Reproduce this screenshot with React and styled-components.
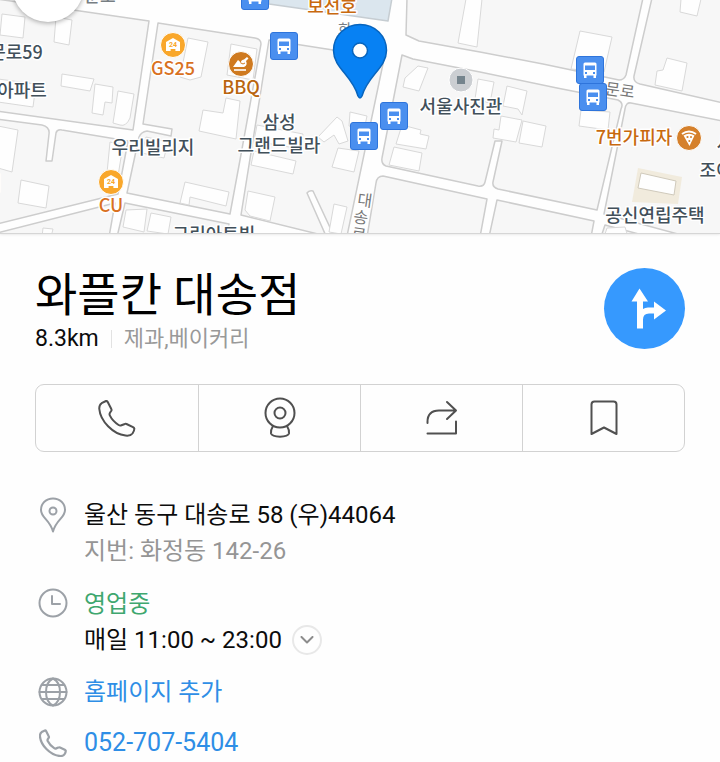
import React from "react";
import styled, { createGlobalStyle } from "styled-components";

const GlobalStyle = createGlobalStyle`
  *, *::before, *::after { box-sizing: border-box; }
  body {
    margin: 0;
    background: #fefefe;
    color: #0c0c0c;
    font-family: Roboto, "Noto Sans CJK KR", sans-serif;
  }
  h1, p, ul { margin: 0; padding: 0; }
  ul { list-style: none; }
  button { font: inherit; color: inherit; cursor: pointer; }
`;

const Page = styled.main`
  display: flex;
  flex-direction: column;
`;

/* Map */

const MapArea = styled.section`
  position: relative;
  overflow: hidden;
  height: 234px;
  border-bottom: 1px solid #d6d6d6;
  box-shadow: 0 0 3px rgba(0, 0, 0, 0.15);
`;

const MapCanvas = styled.svg`
  display: block;
  width: 100%;
  height: 234px;
`;

const Land = styled.path`
  fill: ${(p) => p.$fill || "#f7f7f7"};
  stroke: ${(p) => p.$edge || "#cdcdcd"};
  stroke-width: 1.5;
  stroke-linejoin: round;
`;

const Building = styled.path`
  fill: #fefefe;
  stroke: #d9d9d9;
  stroke-width: 1;
`;

const MapLabel = styled.text`
  font-family: "Noto Sans CJK KR", sans-serif;
  font-size: ${(p) => p.$size || 18}px;
  font-weight: ${(p) => p.$weight || 500};
  fill: ${(p) => p.$color || "#42505a"};
  stroke: #fff;
  stroke-width: 3px;
  stroke-linejoin: round;
  paint-order: stroke;
  text-anchor: middle;
`;

const BackButton = styled.button`
  position: absolute;
  top: -50px;
  left: 12px;
  width: 72px;
  height: 72px;
  border: 0;
  border-radius: 50%;
  background: #fff;
  box-shadow: 0 1px 5px rgba(0, 0, 0, 0.35);
`;

/* Place sheet */

const Sheet = styled.article`
  display: flex;
  flex-direction: column;
  padding: 31px 35px 0;
`;

const Header = styled.header`
  display: flex;
  justify-content: space-between;
  align-items: flex-start;
`;

const Title = styled.h1`
  font-size: 46px;
  line-height: 60px;
  font-weight: 400;
  color: #000;
`;

const Meta = styled.p`
  display: flex;
  align-items: center;
  line-height: 28px;
  font-size: 23px;
`;

const Category = styled.span`
  margin-left: 12px;
  padding-left: 12px;
  font-size: 22px;
  line-height: 18px;
  color: #999;
  border-left: 1px solid #e2e2e2;
`;

const RouteButton = styled.button`
  display: grid;
  place-items: center;
  flex: none;
  width: 81px;
  height: 81px;
  margin-top: 3px;
  padding: 0;
  border: 0;
  border-radius: 50%;
  background: #3699fe;
  color: #fff;
`;

const Actions = styled.div`
  display: grid;
  grid-template-columns: repeat(4, 1fr);
  height: 68px;
  margin-top: 31px;
  border: 1px solid #d2d2d2;
  border-radius: 9px;
`;

const ActionButton = styled.button`
  display: grid;
  place-items: center;
  padding: 0;
  border: 0;
  background: none;
  color: #505050;
  & + & { border-left: 1px solid #d2d2d2; }
`;

const Details = styled.ul`
  display: flex;
  flex-direction: column;
  gap: 17px;
  margin-top: 45px;
`;

const DetailRow = styled.li`
  display: grid;
  grid-template-columns: 35px 1fr;
  column-gap: 14px;
`;

const DetailIcon = styled.span`
  display: grid;
  place-items: center;
  height: 34px;
  color: #9ca1a7;
`;

const Line = styled.p`
  display: flex;
  align-items: center;
  font-size: 24px;
  line-height: 36px;
  color: ${(p) => p.$color || "#0c0c0c"};
`;

const DetailLink = styled.a`
  font-size: ${(p) => p.$size || 24}px;
  line-height: 34px;
  color: #2e8ee6;
  text-decoration: none;
`;

const ExpandButton = styled.button`
  display: grid;
  place-items: center;
  width: 30px;
  height: 30px;
  margin-left: 10px;
  padding: 0;
  border: 2px solid #e8e8e8;
  border-radius: 50%;
  background: none;
  color: #8c8c8c;
`;

const Icon = styled.svg`
  display: block;
  fill: none;
  stroke: currentColor;
  stroke-width: ${(p) => p.$weight || 2};
  stroke-linecap: round;
  stroke-linejoin: round;
`;

const lands = [
  "M-3,-1 L80,11 L149,21 L133,130 L-3,111Z",
  "M158,23 L255,38 Q261,39 261,44 L240,160 L230,214 L127,193 L139,137 Q141,132 147,131 L171,136 L172,129 L143,124Z",
  "M269,40 L333,50 L384,59 L347,236 L334,236 L313,191 Q309,190 307,193 L326,236 L241,215Z",
  "M-3,119 L42,125 Q50,127 49,134 L46,161 L52,161 L56,133 Q57,129 62,130 L128,141 L118,194 L-3,224Z",
  "M-3,233 L115,203 L109,237 L-3,237Z",
  "M125,203 L229,224 L227,237 L117,237Z",
  "M407,-2 L406,35 L419,41 L480,52 L543,64 L619,80 Q624,80 626,75 L643,-2Z",
  "M652,-2 L634,76 Q633,82 640,84 L723,103 L723,-2Z",
  "M402,55 L413,59 L480,72 L557,88 L618,100 Q624,103 621,109 L597,210 L498,189 Q492,187 493,182 L502,141 L495,141 L485,182 Q484,187 478,186 L386,166 Q381,164 382,158Z",
  "M383,176 L487,199 L480,237 L367,237 L376,183 Q377,176 383,176Z",
  "M497,200 L594,221 L591,237 L489,237Z",
  "M631,103 L723,121 L723,240 L700,240 L604,214 L625,109 Q626,102 631,103Z",
  "M605,225 L650,237 L601,237Z",
];

const buildings = [
  "M2,14 L25,17 L23,38 L0,35Z",
  "M56,17 L72,20 L69,45 L54,42Z",
  "M62,74 L94,79 L90,91 L61,86Z",
  "M95,84 L113,87 L112,103 L105,102 L103,115 L92,113Z",
  "M118,91 L134,94 L130,118 Q126,127 120,125 L113,123Z",
  "M-2,79 L36,84 L33,107 L-2,102Z",
  "M-2,126 L18,130 L12,172 L-2,168Z",
  "M21,180 L49,186 L46,208 L18,203Z",
  "M110,142 L123,145 L118,176 L107,173Z",
  "M188,38 L208,42 L201,77 L190,80 L180,77Z",
  "M231,44 L257,49 L253,80 L227,75Z",
  "M226,98 L240,101 L236,139 L199,131 L203,110 L223,113Z",
  "M146,137 L168,142 L164,158 L142,153Z",
  "M185,182 L229,192 L226,206 L190,197 L189,205 L180,203Z",
  "M126,210 L147,209 L144,232 L123,227Z",
  "M151,213 L171,217 L168,234 L147,231Z",
  "M43,228 L53,229 L51,237 L42,237Z",
  "M257,125 L303,134 L301,149 L254,141Z",
  "M254,151 L296,161 L293,174 L251,165Z",
  "M248,191 L275,197 L270,221 L250,216 L245,210Z",
  "M318,137 L337,117 L342,121 L348,141 L339,144 L334,135 L324,142Z",
  "M350,112 L367,116 L364,130 L349,126Z",
  "M338,148 L359,151 L354,172 L332,167Z",
  "M334,204 L347,207 L341,234 L329,232Z",
  "M418,66 L428,68 L419,91 L403,87 L405,78Z",
  "M402,125 L421,130 L420,134 L429,136 L426,149 L396,144Z",
  "M394,147 L422,153 L419,171 L389,165Z",
  "M466,-1 L482,-1 L477,47 L458,43Z",
  "M580,31 L612,37 L604,72 L571,69Z",
  "M681,-1 L701,-1 L697,16 L680,12Z",
  "M667,58 L687,63 L682,91 L655,85 L657,71 L663,70Z",
  "M507,86 L527,91 L522,115 L518,109 L503,106Z",
  "M478,79 L494,82 L490,103 L475,99Z",
  "M501,116 L522,120 L516,142 L493,138 L494,129 L499,130Z",
  "M523,121 L546,126 L542,147 L519,143Z",
  "M581,110 L610,112 L608,130 L579,126Z",
  "M607,228 L625,227 L628,237 L604,237Z",
];

const busStops = [[255, -4], [284, 46], [394, 116], [364, 136], [590, 70], [593, 97]];

function BusStop({ x, y }) {
  return (
    <g transform={`translate(${x} ${y})`}>
      <rect x="-13.5" y="-13.5" width="27" height="27" rx="2.5" fill="#4a8fef" stroke="#2e74db" />
      <path
        fill="#fff"
        fillRule="evenodd"
        d="M-5,-7.5H5Q6.5,-7.5 6.5,-6V5.5H6V8H3.5V5.5H-3.5V8H-6V5.5H-6.5V-6Q-6.5,-7.5 -5,-7.5Z M-5,-4.5V0H5V-4.5Z M-5,2V4H-3V2Z M3,2V4H5V2Z"
      />
    </g>
  );
}

function StoreMarker({ x, y }) {
  return (
    <g transform={`translate(${x} ${y})`}>
      <circle r="12.5" fill="#f9a72b" stroke="#fff" />
      <path d="M0,-7 L7,-3 V6 H2.4 V4 H-2.4 V6 H-7 V-3Z" fill="#fff" />
      <text y="2.4" textAnchor="middle" fontSize="7" fontWeight="700" fontFamily="Roboto, sans-serif" fill="#f9a72b">24</text>
    </g>
  );
}

function PlaceMap() {
  return (
    <MapArea aria-label="지도">
      <MapCanvas viewBox="0 0 720 234" preserveAspectRatio="xMidYMid slice">
        <rect width="720" height="234" fill="#fefefe" />
        {lands.map((d) => <Land key={d} d={d} />)}
        <Land d="M269,-2 L269,4 L388,21 L392,-2Z" $fill="#dbe6ee" $edge="#c6cdd2" />
        <path d="M638,168 L682,177 L678,204 L632,202Z" fill="#f1ebdd" />
        {buildings.map((d) => <Building key={d} d={d} />)}
        <path d="M641,173 L676,181 L674,195 L638,188Z" fill="#fefefe" stroke="#d0cabc" />

        <MapLabel x="100" y="2" $size={17} $color="#777e83">문로</MapLabel>
        <MapLabel x="16" y="59">문로59</MapLabel>
        <MapLabel x="22" y="97">아파트</MapLabel>
        <MapLabel x="153" y="154">우리빌리지</MapLabel>
        <MapLabel x="279" y="129">삼성</MapLabel>
        <MapLabel x="279" y="152">그랜드빌라</MapLabel>
        <MapLabel x="461" y="113">서울사진관</MapLabel>
        <MapLabel x="655" y="222">공신연립주택</MapLabel>
        <MapLabel x="716" y="177">조이</MapLabel>
        <MapLabel x="214" y="241">그린아트빌</MapLabel>
        <MapLabel x="-7" y="190">지</MapLabel>
        <MapLabel x="725" y="150">사</MapLabel>
        <MapLabel x="173" y="75" $color="#d9711f">GS25</MapLabel>
        <MapLabel x="241" y="94" $color="#b9650f">BBQ</MapLabel>
        <MapLabel x="111" y="212" $color="#d9711f">CU</MapLabel>
        <MapLabel x="332" y="13" $color="#c8690f">보선호</MapLabel>
        <MapLabel x="634" y="144" $color="#c8690f">7번가피자</MapLabel>
        <MapLabel x="345" y="35" $size={15} $weight={400} $color="#777e83">화</MapLabel>
        <MapLabel x="620" y="96" $size={16} $weight={400} $color="#777" transform="rotate(8 620 90)">문로</MapLabel>
        <MapLabel x="365" y="206" $size={16} $weight={400} $color="#777" transform="rotate(8 365 200)">대</MapLabel>
        <MapLabel x="361" y="223" $size={16} $weight={400} $color="#777" transform="rotate(8 361 216)">송</MapLabel>
        <MapLabel x="359" y="240" $size={16} $weight={400} $color="#777" transform="rotate(8 359 233)">로</MapLabel>

        <StoreMarker x="173" y="45" />
        <StoreMarker x="111" y="182" />
        <g transform="translate(241 64)">
          <circle r="12.5" fill="#cf7a20" stroke="#fff" />
          <path d="M-8,3 L-3,-4 Q-1,-3 0,0 Q-1,-4 3,-4.5 L6,-7 L7.5,-5.5 L5,-3 Q7,1 3,3Z" fill="#fff" />
          <path d="M-7,6H5" stroke="#fff" strokeWidth="1.6" />
          <path d="M0,-1 Q2,1 4,-1" fill="none" stroke="#cf7a20" />
        </g>
        <g transform="translate(689 138)">
          <circle r="12.5" fill="#d5802b" stroke="#fff" />
          <path d="M-7,-4 Q0,-9 7,-4" fill="none" stroke="#fff" strokeWidth="2" />
          <path d="M-5.5,-2.5 Q0,-6 5.5,-2.5 L0.5,8Z" fill="#fff" />
          <circle cx="-1.5" cy="-1" r="1.1" fill="#d5802b" />
          <circle cx="2" cy="-1" r="1" fill="#d5802b" />
          <circle cx="0.3" cy="3" r="1" fill="#d5802b" />
        </g>
        <g transform="translate(461 80)">
          <circle r="12" fill="#cbced2" stroke="#fff" />
          <rect x="-4" y="-4" width="8" height="8" fill="#75848d" />
        </g>
        {busStops.map(([x, y]) => <BusStop key={`${x}-${y}`} x={x} y={y} />)}

        <path
          d="M360,24.5 C345,24.5 333.5,36 333.5,50.5 C333.5,68 353,76 358,96 Q360,100 362,96 C367,76 386.5,68 386.5,50.5 C386.5,36 375,24.5 360,24.5Z"
          fill="#0781f3"
          stroke="#0764bd"
          strokeWidth="1.5"
        />
        <circle cx="360" cy="50.5" r="7.5" fill="#fff" stroke="#0764bd" strokeWidth="1.5" />
      </MapCanvas>
      <BackButton type="button" aria-label="뒤로" />
    </MapArea>
  );
}

const PhoneIcon = ({ size, weight }) => (
  <Icon width={size} height={size} viewBox="0 0 38 38" $weight={weight} aria-hidden="true">
    <path d="M8,2 L3.6,4.2 Q1,6 1.3,10 C2.3,22 15,35 27.5,36.6 Q32.5,37.2 34.5,34.5 Q36.5,31.5 36.3,29.5 Q36,28.8 35,28.2 L28.5,25 Q27.3,24.5 26.3,25.2 L23.4,26.3 Q22,26.9 20.6,26 Q14.5,22 11.8,16.4 Q11.2,15.2 12,13.8 L13.3,11.8 Q13.8,10.8 13.2,9.8 L9.6,2.8 Q9,1.7 8,2Z" />
  </Icon>
);

const RoadviewIcon = () => (
  <Icon width="32" height="42" viewBox="0 0 32 42" aria-hidden="true">
    <circle cx="16" cy="16" r="14.5" />
    <circle cx="16" cy="16" r="5.5" />
    <path d="M9,29 Q6.5,33 7,36.5 Q8,39.5 16,39.8 Q24,39.5 25,36.5 Q25.5,33 23,29" />
  </Icon>
);

const ShareIcon = () => (
  <Icon width="32" height="36" viewBox="0 0 32 36" aria-hidden="true">
    <path d="M1.5,23 V22 Q1.5,10.5 13,10.5 H29.5 M21,2 L30,10.5 L21,19 M30,21.5 V33.5 H1.5" />
  </Icon>
);

const BookmarkIcon = () => (
  <Icon width="28" height="36" viewBox="0 0 28 36" aria-hidden="true">
    <path d="M1.5,34 V4.5 Q1.5,1.5 4.5,1.5 H23.5 Q26.5,1.5 26.5,4.5 V34 L14,27.5Z" />
  </Icon>
);

const RouteIcon = () => (
  <svg width="44" height="44" viewBox="0 0 44 44" fill="currentColor" aria-hidden="true">
    <path d="M16.5,1.5 L25,14.5 H20 V22 Q22,20.5 25,20.5 H31 V14.5 L43,23.5 L31,32.5 V26.5 H26 Q20,26.5 20,32.5 V41.5 H14 V14.5 H8.5Z" />
  </svg>
);

const PlaceIcon = () => (
  <Icon width="28" height="36" viewBox="0 0 28 36" aria-hidden="true">
    <path d="M14,1.5 C7,1.5 2,6.5 2,13 C2,21 10.5,22 14,34.5 C17.5,22 26,21 26,13 C26,6.5 21,1.5 14,1.5Z" />
    <circle cx="14" cy="14" r="3.5" />
  </Icon>
);

const ClockIcon = () => (
  <Icon width="30" height="30" viewBox="0 0 30 30" aria-hidden="true">
    <circle cx="15" cy="15" r="13.5" />
    <path d="M14,8V16H22" />
  </Icon>
);

const GlobeIcon = () => (
  <Icon width="30" height="30" viewBox="0 0 30 30" aria-hidden="true">
    <circle cx="15" cy="15" r="13.5" />
    <path d="M15,1.5 Q8,5 8,15 Q8,25 15,28.5 Q22,25 22,15 Q22,5 15,1.5Z M4,8H26 M1.5,15H28.5 M4,22H26" />
  </Icon>
);

export default function App() {
  return (
    <Page>
      <GlobalStyle />
      <PlaceMap />
      <Sheet>
        <Header>
          <div>
            <Title>와플칸 대송점</Title>
            <Meta>
              8.3km
              <Category>제과,베이커리</Category>
            </Meta>
          </div>
          <RouteButton type="button" aria-label="길찾기"><RouteIcon /></RouteButton>
        </Header>

        <Actions>
          <ActionButton type="button" aria-label="전화"><PhoneIcon size={38} weight={2} /></ActionButton>
          <ActionButton type="button" aria-label="로드뷰"><RoadviewIcon /></ActionButton>
          <ActionButton type="button" aria-label="공유"><ShareIcon /></ActionButton>
          <ActionButton type="button" aria-label="저장"><BookmarkIcon /></ActionButton>
        </Actions>

        <Details>
          <DetailRow>
            <DetailIcon><PlaceIcon /></DetailIcon>
            <div>
              <Line>울산 동구 대송로 58 (우)44064</Line>
              <Line $color="#959595">지번: 화정동 142-26</Line>
            </div>
          </DetailRow>
          <DetailRow>
            <DetailIcon><ClockIcon /></DetailIcon>
            <div>
              <Line $color="#3fa76f">영업중</Line>
              <Line>
                매일 11:00 ~ 23:00
                <ExpandButton type="button" aria-label="영업시간 더보기">
                  <Icon width="14" height="8" viewBox="0 0 14 8" aria-hidden="true"><path d="M1.5,1 L7,6.5 L12.5,1" /></Icon>
                </ExpandButton>
              </Line>
            </div>
          </DetailRow>
          <DetailRow>
            <DetailIcon><GlobeIcon /></DetailIcon>
            <DetailLink href="#homepage">홈페이지 추가</DetailLink>
          </DetailRow>
          <DetailRow>
            <DetailIcon><PhoneIcon size={28} weight={3} /></DetailIcon>
            <DetailLink href="tel:052-707-5404" $size={25}>052-707-5404</DetailLink>
          </DetailRow>
        </Details>
      </Sheet>
    </Page>
  );
}
